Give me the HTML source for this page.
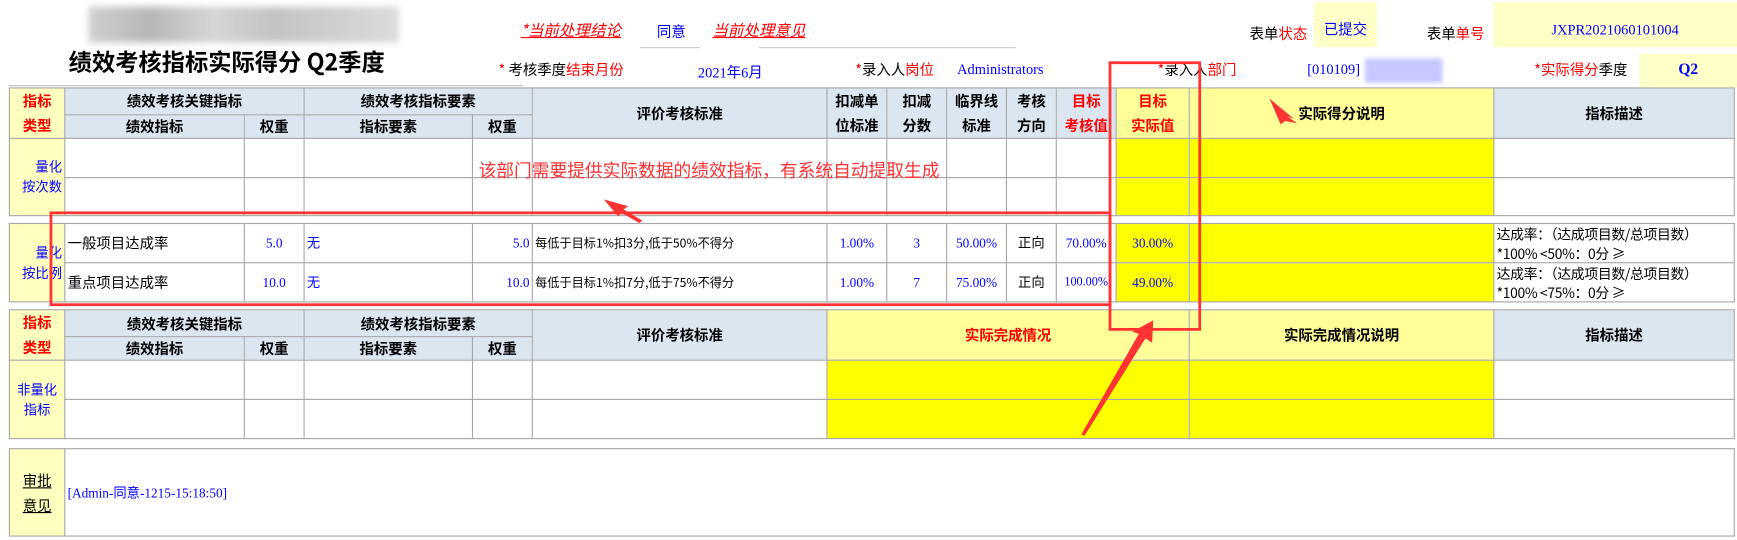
<!DOCTYPE html>
<html><head><meta charset="utf-8"><style>
html,body{margin:0;padding:0;background:#fff;overflow:hidden;width:1737px;height:540px}
#w{position:absolute;left:0;top:0;width:1568px;height:482px;transform:scale(1.1078,1.1203);transform-origin:0 0;font-family:"Liberation Serif","Noto Sans CJK SC",sans-serif;font-size:12px}
.a{position:absolute;white-space:nowrap}
table{position:absolute;border-collapse:collapse;table-layout:fixed}
td{border:1px solid #a6a6a6;padding:0 2px;font-size:12px;overflow:hidden;line-height:14px}
.h{background:#dce6f1;font-weight:bold;text-align:center;font-size:13px;font-family:"Noto Sans CJK SC",sans-serif}
.t{background:#ffffc0;text-align:center;font-family:"Noto Sans CJK SC",sans-serif;font-size:12px;line-height:18px}
.y{background:#ffff00}
.ly{background:#ffff99}
.r{color:#f00}.b{color:#00f}
.c{text-align:center}.rt{text-align:right}
.s{font-family:"Noto Sans CJK SC",sans-serif}
</style></head><body><div id="w">
<div class="a" style="left:80px;top:6px;width:280px;height:32px;background:linear-gradient(90deg,#bbb,#999,#c4c4c4,#aaa,#bbb,#ccc);filter:blur(3px);opacity:.7"></div>
<div class="a s" style="left:62px;top:40px;font-size:21px;font-weight:bold;">绩效考核指标实际得分 Q2季度</div>
<div class="a" style="left:8px;top:76px;width:464px;border-top:1px solid #bbb;border-bottom:1px solid #bbb;height:2px"></div>
<div class="a s r" style="left:470px;top:17px;font-size:14px;font-style:italic;text-decoration:underline">*当前处理结论</div>
<div class="a s b" style="left:593px;top:18px;font-size:13px">同意</div>
<div class="a" style="left:578px;top:42px;width:54px;border-top:1px solid #ccc"></div>
<div class="a s r" style="left:643px;top:17px;font-size:14px;font-style:italic;text-decoration:underline">当前处理意见</div>
<div class="a" style="left:685px;top:42px;width:232px;border-top:1px solid #ccc"></div>
<div class="a s" style="left:1128px;top:20px;font-size:13px">表单<span class="r">状态</span></div>
<div class="a s b" style="left:1186px;top:2px;width:57px;height:40px;background:#ffffc8;line-height:48px;font-size:13px;padding-left:9px;box-sizing:border-box">已提交</div>
<div class="a s" style="left:1288px;top:20px;font-size:13px">表单<span class="r">单号</span></div>
<div class="a b" style="left:1348px;top:2px;width:220px;height:40px;background:#ffffc8;line-height:50px;text-align:center;font-size:13px">JXPR2021060101004</div>
<div class="a s" style="left:450px;top:52px;font-size:13px"><span class="r">* </span>考核季度<span class="r">结束月份</span></div>
<div class="a b" style="left:630px;top:54px;font-size:13px">2021年6月</div>
<div class="a" style="left:578px;top:78px;width:250px;border-top:1px solid #ccc"></div>
<div class="a s" style="left:772px;top:52px;font-size:13px"><span class="r">*</span>录入人<span class="r">岗位</span></div>
<div class="a b" style="left:864px;top:54px;font-size:13px">Administrators</div>
<div class="a s" style="left:1045px;top:52px;font-size:13px"><span class="r">*</span>录入人<span class="r">部门</span></div>
<div class="a b" style="left:1180px;top:54px;font-size:13px">[010109]</div>
<div class="a" style="left:1232px;top:52px;width:70px;height:22px;background:#c8c8ff;filter:blur(2px)"></div>
<div class="a" style="left:1125px;top:78px;width:235px;border-top:1px solid #ccc"></div>
<div class="a s" style="left:1385px;top:52px;font-size:13px"><span class="r">*实际得分</span>季度</div>
<div class="a b" style="left:1480px;top:48px;width:88px;height:30px;background:#ffffc8;line-height:30px;text-align:center;font-weight:bold;font-size:14px">Q2</div>

<table style="left:8px;top:78px;width:1557px">
<colgroup><col style="width:50px"><col style="width:162px"><col style="width:54px"><col style="width:152px"><col style="width:54px"><col style="width:266px"><col style="width:54px"><col style="width:54px"><col style="width:54px"><col style="width:45px"><col style="width:54px"><col style="width:66px"><col style="width:275px"><col style="width:217px"></colgroup>
<tr style="height:23px"><td class="t r" rowspan="2" style="font-weight:bold;font-size:13px;line-height:22px">指标<br>类型</td><td class="h" colspan="2">绩效考核关键指标</td><td class="h" colspan="2">绩效考核指标要素</td><td class="h" rowspan="2">评价考核标准</td><td class="h" rowspan="2" style="line-height:22px">扣减单<br>位标准</td><td class="h" rowspan="2" style="line-height:22px">扣减<br>分数</td><td class="h" rowspan="2" style="line-height:22px">临界线<br>标准</td><td class="h" rowspan="2" style="line-height:22px">考核<br>方向</td><td class="h r" rowspan="2" style="line-height:22px">目标<br>考核值</td><td class="h r ly" rowspan="2" style="line-height:22px">目标<br>实际值</td><td class="h ly" rowspan="2">实际得分说明</td><td class="h" rowspan="2">指标描述</td></tr>
<tr style="height:21px"><td class="h">绩效指标</td><td class="h">权重</td><td class="h">指标要素</td><td class="h">权重</td></tr>
<tr style="height:35px"><td class="t b rt" rowspan="2">量化<br>按次数</td><td></td><td></td><td></td><td></td><td></td><td></td><td></td><td></td><td></td><td></td><td class="y"></td><td class="y"></td><td></td></tr>
<tr style="height:34px"><td></td><td></td><td></td><td></td><td></td><td></td><td></td><td></td><td></td><td></td><td class="y"></td><td class="y"></td><td></td></tr>
</table>

<table style="left:8px;top:199px;width:1557px">
<colgroup><col style="width:50px"><col style="width:162px"><col style="width:54px"><col style="width:152px"><col style="width:54px"><col style="width:266px"><col style="width:54px"><col style="width:54px"><col style="width:54px"><col style="width:45px"><col style="width:54px"><col style="width:66px"><col style="width:275px"><col style="width:217px"></colgroup>
<tr style="height:35px"><td class="t b rt" rowspan="2">量化<br>按比例</td><td class="s" style="font-size:13px">一般项目达成率</td><td class="b c">5.0</td><td class="b s">无</td><td class="b rt">5.0</td><td class="s" style="font-size:11px">每低于目标1%扣3分,低于50%不得分</td><td class="b c">1.00%</td><td class="b c">3</td><td class="b c">50.00%</td><td class="s c">正向</td><td class="b c">70.00%</td><td class="y b c">30.00%</td><td class="y"></td><td class="s" style="font-size:12.5px;line-height:17px;white-space:normal;letter-spacing:-0.3px">达成率：（达成项目数/总项目数）*100% &lt;50%：0分 ≥</td></tr>
<tr style="height:35px"><td class="s" style="font-size:13px">重点项目达成率</td><td class="b c">10.0</td><td class="b s">无</td><td class="b rt">10.0</td><td class="s" style="font-size:11px">每低于目标1%扣7分,低于75%不得分</td><td class="b c">1.00%</td><td class="b c">7</td><td class="b c">75.00%</td><td class="s c">正向</td><td class="b c" style="font-size:11px">100.00%</td><td class="y b c">49.00%</td><td class="y"></td><td class="s" style="font-size:12.5px;line-height:17px;white-space:normal;letter-spacing:-0.3px">达成率：（达成项目数/总项目数）*100% &lt;75%：0分 ≥</td></tr>
</table>

<table style="left:8px;top:276px;width:1557px">
<colgroup><col style="width:50px"><col style="width:162px"><col style="width:54px"><col style="width:152px"><col style="width:54px"><col style="width:266px"><col style="width:327px"><col style="width:275px"><col style="width:217px"></colgroup>
<tr style="height:24px"><td class="t r" rowspan="2" style="font-weight:bold;font-size:13px;line-height:22px">指标<br>类型</td><td class="h" colspan="2">绩效考核关键指标</td><td class="h" colspan="2">绩效考核指标要素</td><td class="h" rowspan="2">评价考核标准</td><td class="h r ly" rowspan="2">实际完成情况</td><td class="h ly" rowspan="2">实际完成情况说明</td><td class="h" rowspan="2">指标描述</td></tr>
<tr style="height:21px"><td class="h">绩效指标</td><td class="h">权重</td><td class="h">指标要素</td><td class="h">权重</td></tr>
<tr style="height:35px"><td class="t b" rowspan="2">非量化<br>指标</td><td></td><td></td><td></td><td></td><td></td><td class="y"></td><td class="y"></td><td></td></tr>
<tr style="height:35px"><td></td><td></td><td></td><td></td><td></td><td class="y"></td><td class="y"></td><td></td></tr>
</table>

<table style="left:8px;top:400px;width:1557px">
<colgroup><col style="width:50px"><col style="width:1507px"></colgroup>
<tr style="height:78px"><td class="t" style="text-decoration:underline;font-size:13px;line-height:22px">审批<br>意见</td><td class="b" style="font-size:12px">[Admin-同意-1215-15:18:50]</td></tr>
</table>

<svg class="a" style="left:0;top:0" width="1568" height="482">
<g fill="none" stroke="#f33" stroke-width="2.5">
<rect x="46" y="190" width="956" height="82"/>
<rect x="1002" y="56" width="81" height="238"/>
</g>
<g fill="#f33">
<polygon points="545,178 567,184 563,187 580,197 577,199 561,190 558,193"/>
<polygon points="1146,88 1168,106 1162,104 1171,110 1160,108 1156,111"/>
<polygon points="1041,286 1040,306 1034,302 979,389 976,388 1028,298 1022,296"/>
</g>
</svg>
<div class="a s" style="left:432px;top:139px;font-size:16px;color:#f33">该部门需要提供实际数据的绩效指标，有系统自动提取生成</div>
</div></body></html>
